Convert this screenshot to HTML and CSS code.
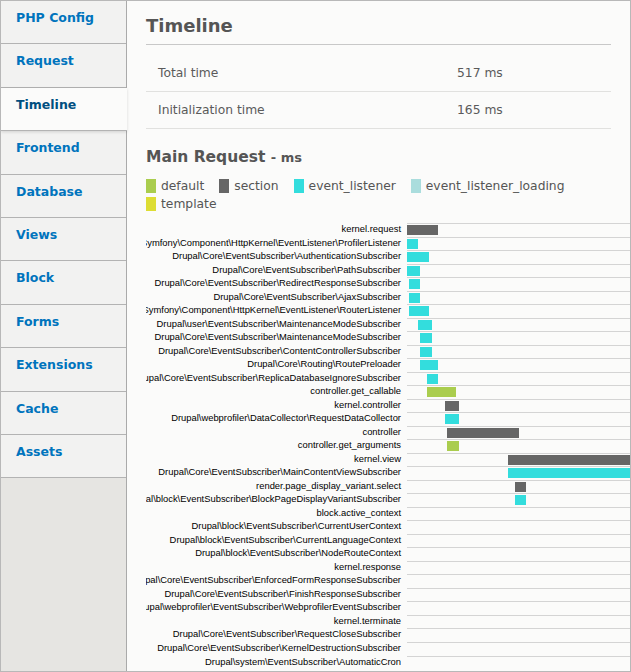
FILE: index.html
```html
<!DOCTYPE html>
<html lang="en">
<head>
<meta charset="utf-8">
<title>Timeline</title>
<link rel="stylesheet" href="styles.css">
</head>
<body>
<div class="profiler">
  <nav class="sidebar">
    <a class="tab" href="#">PHP Config</a>
    <a class="tab" href="#">Request</a>
    <a class="tab active" href="#">Timeline</a>
    <a class="tab" href="#">Frontend</a>
    <a class="tab" href="#">Database</a>
    <a class="tab" href="#">Views</a>
    <a class="tab" href="#">Block</a>
    <a class="tab" href="#">Forms</a>
    <a class="tab" href="#">Extensions</a>
    <a class="tab" href="#">Cache</a>
    <a class="tab" href="#">Assets</a>
  </nav>
  <main class="panel">
    <h2 class="title">Timeline</h2>
    <div class="stats">
      <div class="stat"><span class="stat-name">Total time</span><span class="stat-value">517 ms</span></div>
      <div class="stat"><span class="stat-name">Initialization time</span><span class="stat-value">165 ms</span></div>
    </div>
    <h3 class="subtitle">Main Request <small>- ms</small></h3>
    <ul class="legend">
      <li class="legend-item"><i class="swatch default"></i>default</li>
      <li class="legend-item"><i class="swatch section"></i>section</li>
      <li class="legend-item"><i class="swatch event_listener"></i>event_listener</li>
      <li class="legend-item"><i class="swatch event_listener_loading"></i>event_listener_loading</li>
      <li class="legend-item"><i class="swatch template"></i>template</li>
    </ul>
    <div class="timeline">
      <div class="row"><div class="label"><span>kernel.request</span></div><div class="track"><i class="bar section" style="margin-left:0px;width:31px"></i></div></div>
      <div class="row"><div class="label"><span>Symfony\Component\HttpKernel\EventListener\ProfilerListener</span></div><div class="track"><i class="bar event_listener" style="margin-left:0px;width:11px"></i></div></div>
      <div class="row"><div class="label"><span>Drupal\Core\EventSubscriber\AuthenticationSubscriber</span></div><div class="track"><i class="bar event_listener" style="margin-left:0px;width:22px"></i></div></div>
      <div class="row"><div class="label"><span>Drupal\Core\EventSubscriber\PathSubscriber</span></div><div class="track"><i class="bar event_listener" style="margin-left:0px;width:13px"></i></div></div>
      <div class="row"><div class="label"><span>Drupal\Core\EventSubscriber\RedirectResponseSubscriber</span></div><div class="track"><i class="bar event_listener" style="margin-left:2px;width:11px"></i></div></div>
      <div class="row"><div class="label"><span>Drupal\Core\EventSubscriber\AjaxSubscriber</span></div><div class="track"><i class="bar event_listener" style="margin-left:2px;width:11px"></i></div></div>
      <div class="row"><div class="label"><span>Symfony\Component\HttpKernel\EventListener\RouterListener</span></div><div class="track"><i class="bar event_listener" style="margin-left:2px;width:20px"></i></div></div>
      <div class="row"><div class="label"><span>Drupal\user\EventSubscriber\MaintenanceModeSubscriber</span></div><div class="track"><i class="bar event_listener" style="margin-left:11px;width:14px"></i></div></div>
      <div class="row"><div class="label"><span>Drupal\Core\EventSubscriber\MaintenanceModeSubscriber</span></div><div class="track"><i class="bar event_listener" style="margin-left:13px;width:12px"></i></div></div>
      <div class="row"><div class="label"><span>Drupal\Core\EventSubscriber\ContentControllerSubscriber</span></div><div class="track"><i class="bar event_listener" style="margin-left:13px;width:12px"></i></div></div>
      <div class="row"><div class="label"><span>Drupal\Core\Routing\RoutePreloader</span></div><div class="track"><i class="bar event_listener" style="margin-left:13px;width:18px"></i></div></div>
      <div class="row"><div class="label"><span>Drupal\Core\EventSubscriber\ReplicaDatabaseIgnoreSubscriber</span></div><div class="track"><i class="bar event_listener" style="margin-left:20px;width:11px"></i></div></div>
      <div class="row"><div class="label"><span>controller.get_callable</span></div><div class="track"><i class="bar default" style="margin-left:20px;width:29px"></i></div></div>
      <div class="row"><div class="label"><span>kernel.controller</span></div><div class="track"><i class="bar section" style="margin-left:38px;width:14px"></i></div></div>
      <div class="row"><div class="label"><span>Drupal\webprofiler\DataCollector\RequestDataCollector</span></div><div class="track"><i class="bar event_listener" style="margin-left:38px;width:14px"></i></div></div>
      <div class="row"><div class="label"><span>controller</span></div><div class="track"><i class="bar section" style="margin-left:40px;width:72px"></i></div></div>
      <div class="row"><div class="label"><span>controller.get_arguments</span></div><div class="track"><i class="bar default" style="margin-left:40px;width:12px"></i></div></div>
      <div class="row"><div class="label"><span>kernel.view</span></div><div class="track"><i class="bar section" style="margin-left:101px;width:200px"></i></div></div>
      <div class="row"><div class="label"><span>Drupal\Core\EventSubscriber\MainContentViewSubscriber</span></div><div class="track"><i class="bar event_listener" style="margin-left:101px;width:200px"></i></div></div>
      <div class="row"><div class="label"><span>render.page_display_variant.select</span></div><div class="track"><i class="bar section" style="margin-left:108px;width:11px"></i></div></div>
      <div class="row"><div class="label"><span>Drupal\block\EventSubscriber\BlockPageDisplayVariantSubscriber</span></div><div class="track"><i class="bar event_listener" style="margin-left:108px;width:11px"></i></div></div>
      <div class="row"><div class="label"><span>block.active_context</span></div><div class="track"></div></div>
      <div class="row"><div class="label"><span>Drupal\block\EventSubscriber\CurrentUserContext</span></div><div class="track"></div></div>
      <div class="row"><div class="label"><span>Drupal\block\EventSubscriber\CurrentLanguageContext</span></div><div class="track"></div></div>
      <div class="row"><div class="label"><span>Drupal\block\EventSubscriber\NodeRouteContext</span></div><div class="track"></div></div>
      <div class="row"><div class="label"><span>kernel.response</span></div><div class="track"></div></div>
      <div class="row"><div class="label"><span>Drupal\Core\EventSubscriber\EnforcedFormResponseSubscriber</span></div><div class="track"></div></div>
      <div class="row"><div class="label"><span>Drupal\Core\EventSubscriber\FinishResponseSubscriber</span></div><div class="track"></div></div>
      <div class="row"><div class="label"><span>Drupal\webprofiler\EventSubscriber\WebprofilerEventSubscriber</span></div><div class="track"></div></div>
      <div class="row"><div class="label"><span>kernel.terminate</span></div><div class="track"></div></div>
      <div class="row"><div class="label"><span>Drupal\Core\EventSubscriber\RequestCloseSubscriber</span></div><div class="track"></div></div>
      <div class="row"><div class="label"><span>Drupal\Core\EventSubscriber\KernelDestructionSubscriber</span></div><div class="track"></div></div>
      <div class="row"><div class="label"><span>Drupal\system\EventSubscriber\AutomaticCron</span></div><div class="track"></div></div>
    </div>
  </main>
</div>
</body>
</html>
```

FILE: styles.css
```css
html, body {
  margin: 0;
  padding: 0;
}

body {
  width: 631px;
  height: 672px;
  background: #fbfbfa;
  font-family: "DejaVu Sans", sans-serif;
}

.profiler {
  display: flex;
  height: 672px;
  box-sizing: border-box;
  border: 1px solid #b8b8b8;
  overflow: hidden;
}

/* Sidebar */
.sidebar {
  width: 125px;
  flex: none;
  display: flex;
  flex-direction: column;
  background: #e6e5e2;
  border-right: 1px solid #aaaaaa;
}

.tab {
  display: block;
  height: 43.4px;
  box-sizing: border-box;
  padding: 9px 0 0 15px;
  line-height: 16px;
  font-size: 12.5px;
  font-weight: bold;
  color: #0074bd;
  background: #f2f2f1;
  border-bottom: 1px solid #b3b3b3;
  text-decoration: none;
}

.tab.active {
  position: relative;
  margin-right: -1px;
  background: #fbfbfa;
  color: #004f80;
  box-shadow: 0 1px 3px rgba(0, 0, 0, 0.14);
}

/* Main panel */
.panel {
  flex: 1;
  min-width: 0;
  padding: 14px 19px 0 19px;
  overflow: hidden;
  background: #fbfbfa;
}

.title {
  margin: 0;
  padding: 0 0 7px;
  font-size: 18px;
  line-height: 22px;
  font-weight: bold;
  color: #555555;
  border-bottom: 1px solid #c8c8c8;
}

.stats {
  margin-top: 10px;
}

.stat {
  display: flex;
  align-items: center;
  height: 36px;
  padding-left: 12px;
  border-bottom: 1px solid #e1e1df;
  font-size: 12.3px;
  color: #5a5a5a;
}

.stat-name {
  width: 299px;
  flex: none;
}

.subtitle {
  margin: 18px 0 0;
  font-size: 15.5px;
  line-height: 20px;
  font-weight: bold;
  color: #555555;
}

.subtitle small {
  font-size: 13px;
}

.legend {
  display: flex;
  flex-wrap: wrap;
  column-gap: 15px;
  row-gap: 4px;
  margin: 11px 0 0;
  padding: 0;
  list-style: none;
}

.legend-item {
  display: flex;
  align-items: center;
  gap: 5px;
  height: 14px;
  line-height: 13px;
  font-size: 12.3px;
  color: #555555;
}

.swatch {
  display: block;
  width: 10px;
  height: 14px;
}

.default { background: #aacd4e; }
.section { background: #666666; }
.event_listener { background: #33dddd; }
.event_listener_loading { background: #aadddd; }
.template { background: #dddd33; }

/* Timeline chart */
.timeline {
  margin: 12px -19px 0 0;
  overflow: hidden;
  font-family: "Liberation Sans", Arial, sans-serif;
  font-size: 9.4px;
  color: #000000;
}

.row {
  display: flex;
  height: 13.53px;
}

.label {
  width: 255px;
  flex: none;
  display: flex;
  justify-content: flex-end;
  line-height: 11.6px;
  white-space: nowrap;
}

.label span {
  flex: none;
}

.track {
  flex: 1;
  margin-left: 6px;
  box-sizing: border-box;
  border-top: 1px solid #d4d4d4;
}

.bar {
  display: block;
  height: 10px;
  margin-top: 1px;
}
```
